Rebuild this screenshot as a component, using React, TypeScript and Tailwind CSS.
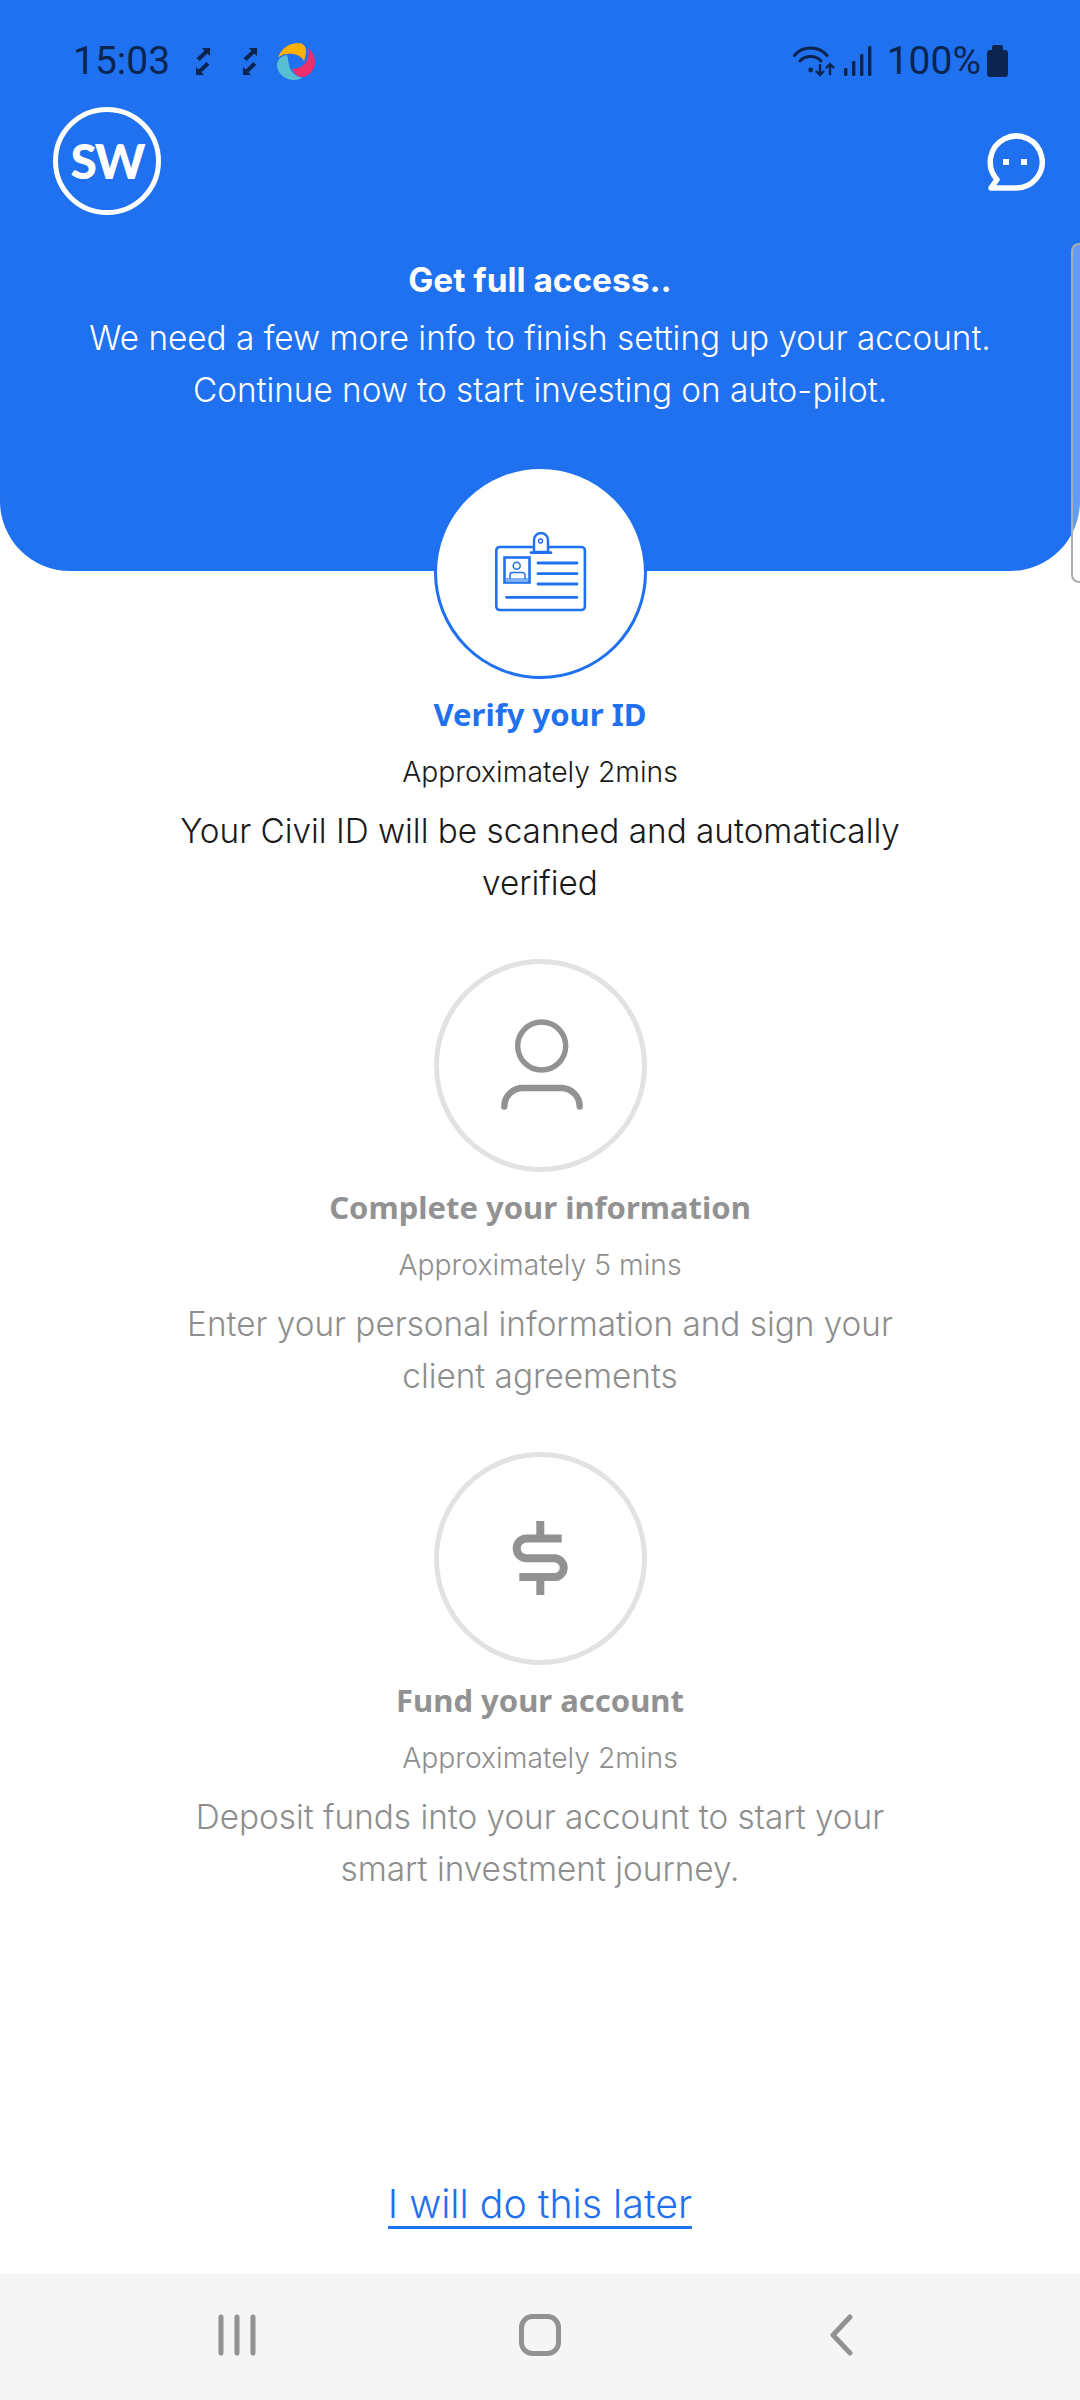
import React from 'react';

const inter = "font-['Inter',sans-serif]";
const roboto = "font-['Roboto',sans-serif]";
const titleFont = "font-['Noto_Sans',sans-serif]";

const SyncArrows = ({ className }: { className?: string }) => (
  <svg width="14" height="27" viewBox="0 0 14 27" className={className}>
    <path d="M6 0H14V8L11.3 5.6L3.6 13L0.6 10.2L8.4 2.8Z" fill="#0b2550" />
    <path d="M8 27H0V19L2.7 21.4L10.4 14L13.4 16.8L5.6 24.2Z" fill="#0b2550" />
  </svg>
);

const AppSwirl = () => (
  <svg width="38" height="37" viewBox="0 0 38 37" className="ml-[20px]">
    <path d="M1 15C4 5 13 0 21 0C26 0 29 3 29 8C29 11 28 16 27 18C24 12 16 10 10 11C6 11 3 13 1 15Z" fill="#fdb008" />
    <path d="M31 5C36 9 38 14 38 19C38 28 30 35 24 34C20 33 17 30 15 26C22 26 29 22 31 15C32 11 32 8 31 5Z" fill="#ee2f6c" />
    <path d="M10 12C4 13 0 17 0 22C0 31 9 37 17 37C20 37 23 36 25 35C18 33 13 28 12 22C11 18 11 15 10 12Z" fill="#58bfd2" />
  </svg>
);

const WifiIcon = () => (
  <svg width="42" height="31" viewBox="0 0 42 31" fill="none" stroke="#0b2550" strokeLinecap="round">
    <path d="M1.5 9.5C9 -0.5 26 -0.5 34 9.5" strokeWidth="3" />
    <path d="M7 15C12 9 23 9 28 15" strokeWidth="3" />
    <circle cx="17.7" cy="24" r="2.4" fill="#0b2550" stroke="none" />
    <path d="M27 19V29M23.5 25.5L27 29L30.5 25.5" strokeWidth="2.4" />
    <path d="M37 28V18M33.5 21.5L37 18L40.5 21.5" strokeWidth="2.4" />
  </svg>
);

const SignalIcon = () => (
  <svg width="28" height="30" viewBox="0 0 28 30" fill="#0b2550">
    <rect x="0" y="22" width="3.4" height="8" rx="1.2" />
    <rect x="8" y="15" width="3.4" height="15" rx="1.2" />
    <rect x="16" y="8" width="3.4" height="22" rx="1.2" />
    <rect x="24" y="0" width="3.4" height="30" rx="1.2" />
  </svg>
);

const BatteryIcon = () => (
  <svg width="21" height="32" viewBox="0 0 21 32" fill="#0b2550">
    <rect x="5" y="0" width="11" height="8" rx="2" />
    <rect x="0" y="5" width="21" height="27" rx="3" />
  </svg>
);

const ChatIcon = () => (
  <svg width="62" height="62" viewBox="0 0 62 62" fill="none" stroke="white" strokeWidth="5.5" strokeLinejoin="round" strokeLinecap="round">
    <path d="M31 57H7L13 48.5A26 26 0 1 1 31 57Z" />
    <rect x="19" y="28" width="6" height="6" fill="white" stroke="none" />
    <rect x="37" y="28" width="6" height="6" fill="white" stroke="none" />
  </svg>
);

const IdCardIcon = () => (
  <svg width="92" height="80" viewBox="0 0 92 80" fill="none" stroke="#1f71f0" className="mt-[-1px] ml-[1px]">
    <rect x="1.3" y="15" width="88.6" height="63" rx="3.5" strokeWidth="2.6" />
    <path d="M39 20V8a7 7 0 0 1 14 0V20Z" fill="white" strokeWidth="2.4" />
    <path d="M36 20.7H56" strokeWidth="2.8" strokeLinecap="round" />
    <circle cx="45.5" cy="9" r="2" strokeWidth="1.4" />
    <rect x="9.5" y="25.5" width="25" height="25" strokeWidth="2.6" />
    <rect x="11" y="46" width="22" height="4" fill="#7fb0f6" stroke="none" />
    <circle cx="21.7" cy="33.7" r="3.5" strokeWidth="1.5" />
    <path d="M15 47V43a2.4 2.4 0 0 1 2.4-2.4H27.6A2.4 2.4 0 0 1 30 43V47" strokeWidth="1.5" />
    <path d="M43 31H82M43 41.7H82M43 52H82M11.5 65.3H82" strokeWidth="2.8" strokeLinecap="round" />
  </svg>
);

const PersonIcon = () => (
  <svg width="82" height="92" viewBox="0 0 82 92" fill="none" stroke="#929292" className="ml-[3px] mt-[-2px]">
    <circle cx="40.7" cy="27" r="24" strokeWidth="5.4" />
    <path d="M3.3 87.5C3.3 77 12 69 22 69H60C70 69 78.7 77 78.7 87.5" strokeWidth="6.4" strokeLinecap="round" />
  </svg>
);

const DollarIcon = () => (
  <svg width="56" height="74" viewBox="0 0 56 74" fill="none" stroke="#929292" strokeWidth="8" className="mt-[-2px]">
    <path d="M49.7 17.5H14.6a9.9 9.9 0 0 0 0 19.8H42.3a9.4 9.4 0 0 1 0 18.8H7.3" />
    <path d="M28.3 0V17.5M28.3 56V74" />
  </svg>
);

type Step = {
  title: string;
  time: string;
  lines: string[];
  icon: React.ReactNode;
  active?: boolean;
};

const steps: Step[] = [
  {
    title: 'Verify your ID',
    time: 'Approximately 2mins',
    lines: ['Your Civil ID will be scanned and automatically', 'verified'],
    icon: <IdCardIcon />,
    active: true,
  },
  {
    title: 'Complete your information',
    time: 'Approximately 5 mins',
    lines: ['Enter your personal information and sign your', 'client agreements'],
    icon: <PersonIcon />,
  },
  {
    title: 'Fund your account',
    time: 'Approximately 2mins',
    lines: ['Deposit funds into your account to start your', 'smart investment journey.'],
    icon: <DollarIcon />,
  },
];

const StepBlock = ({ step }: { step: Step }) => (
  <div className="flex h-[493px] flex-col items-center">
    <div
      className={`relative z-10 flex h-[213px] w-[213px] items-center justify-center rounded-full bg-white ${
        step.active ? 'border-[3px] border-[#1f71f0]' : 'border-[5px] border-[#e2e2e2]'
      }`}
    >
      {step.icon}
    </div>
    <h2
      className={`mt-[13px] h-[44px] text-[31px] leading-[44px] font-bold ${titleFont} ${
        step.active ? 'text-[#1f71f0]' : 'text-[#929292]'
      }`}
    >
      {step.title}
    </h2>
    <p className={`mt-[18px] text-[28.3px] leading-[36px] font-[350] ${inter} ${step.active ? 'text-[#1a1a1a]' : 'text-[#8e8e8e]'}`}>
      {step.time}
    </p>
    <div className={`mt-[15px] text-center text-[33.3px] leading-[52px] font-[350] ${inter} ${step.active ? 'text-[#1a1a1a]' : 'text-[#8e8e8e]'}`}>
      {step.lines.map((line) => (
        <p key={line}>{line}</p>
      ))}
    </div>
  </div>
);

export default function App() {
  return (
    <div className="relative flex h-[2400px] w-[1080px] flex-col overflow-hidden bg-white">
      {/* blue header */}
      <header className="h-[571px] rounded-b-[70px] bg-[#1f71f0]">
        <div className={`flex h-[107px] items-start justify-between pt-[38px] pr-[72px] pl-[73px] ${roboto} text-[39px] leading-[46px] text-[#0b2550]`}>
          <div className="flex items-center">
            <span>15:03</span>
            <SyncArrows className="ml-[26px]" />
            <SyncArrows className="ml-[33px]" />
            <AppSwirl />
          </div>
          <div className="flex items-center">
            <WifiIcon />
            <span className="ml-[9px]"><SignalIcon /></span>
            <span className="ml-[15px]">100%</span>
            <span className="ml-[6px]"><BatteryIcon /></span>
          </div>
        </div>

        <div className="flex items-start justify-between pr-[34px] pl-[53px]">
          <div className="flex h-[108px] w-[108px] items-center justify-center rounded-full border-[5px] border-white font-['Lato',sans-serif] text-[48px] leading-none font-black tracking-[-2px] text-white">
            SW
          </div>
          <div className="mt-[24px]"><ChatIcon /></div>
        </div>

        <div className={`mt-[42px] text-center text-white ${inter}`}>
          <p className="text-[33.4px] leading-[46px] font-bold">Get full access..</p>
          <p className="mt-[9px] text-[33.3px] leading-[52px] font-[350]">We need a few more info to finish setting up your account.</p>
          <p className="text-[33.3px] leading-[52px] font-[350]">Continue now to start investing on auto-pilot.</p>
        </div>
      </header>

      {/* scroll indicator on the right edge */}
      <div className="absolute top-[243px] right-0 h-[340px] w-[9px] rounded-l-[8px] border-y-2 border-l-2 border-[#adadad] bg-white/30" />

      <main className="mt-[-105px] flex flex-1 flex-col">
        {steps.map((step) => (
          <StepBlock key={step.title} step={step} />
        ))}
        <div className="mt-[237px] flex justify-center">
          <a className={`border-b-[3px] border-[#1f71f0] text-[39.3px] leading-[44px] font-[350] text-[#1f71f0] ${inter}`}>
            I will do this later
          </a>
        </div>
      </main>

      {/* android nav bar */}
      <nav className="flex h-[126px] items-center justify-between bg-[#f5f5f5] pr-[227px] pb-[4px] pl-[218px]">
        <svg width="38" height="42" viewBox="0 0 38 42" stroke="#929292" strokeWidth="5" strokeLinecap="round">
          <path d="M3 3V39M19 3V39M35 3V39" />
        </svg>
        <svg width="42" height="42" viewBox="0 0 42 42" fill="none" stroke="#929292" strokeWidth="5" className="mr-[5px]">
          <rect x="2.5" y="2.5" width="37" height="37" rx="11" />
        </svg>
        <svg width="24" height="42" viewBox="0 0 24 42" fill="none" stroke="#929292" strokeWidth="5" strokeLinecap="round" strokeLinejoin="round">
          <path d="M21 3L4 21L21 39" />
        </svg>
      </nav>
    </div>
  );
}
